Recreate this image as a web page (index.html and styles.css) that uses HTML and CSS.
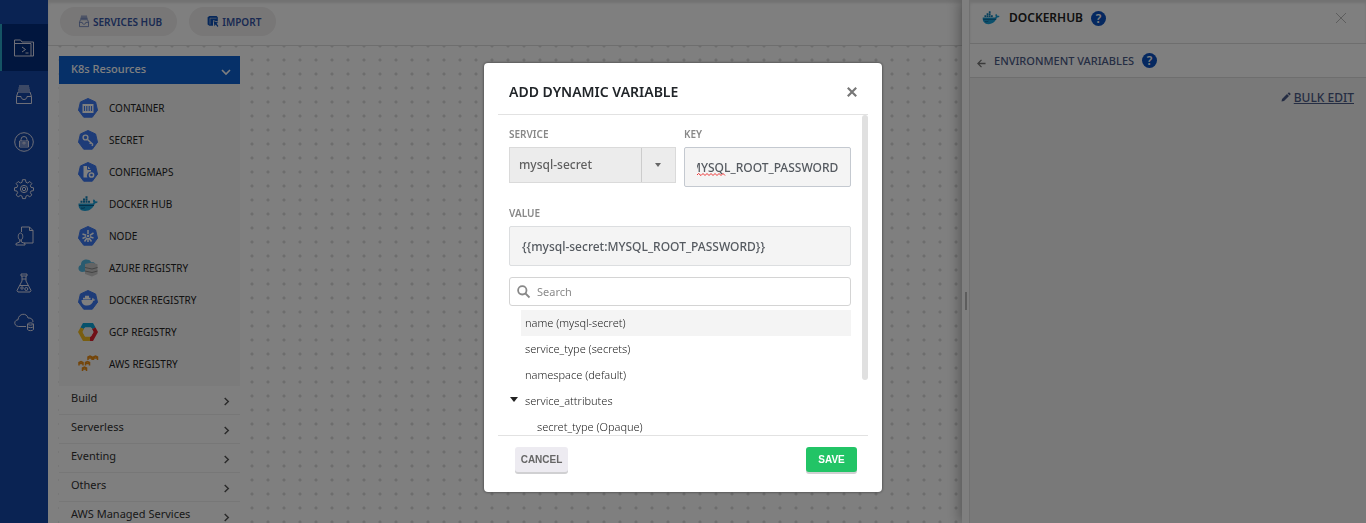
FILE: index.html
```html
<!DOCTYPE html>
<html lang="en">
<head>
<meta charset="utf-8">
<title>Add dynamic variable</title>
<link rel="stylesheet" href="styles.css">
</head>
<body>
<svg class="defs" aria-hidden="true">
  <symbol id="hept" viewBox="0 0 20 20"><path d="M10 .5 17.6 4 19.5 12.2 14.300 19.200H5.700L.5 12.200 2.400 4z" fill="#3c78f0" stroke="#3c78f0" stroke-linejoin="round"/></symbol>
  <symbol id="whale" viewBox="0 0 20 16"><path d="M.5 7.500h13.800c.6-.1 1-.4 1.200-.8-.8-1.100-.5-2.600.2-3.500 1 .6 1.500 1.400 1.500 2.200.9-.2 1.900 0 2.600.4-.5 1.200-1.500 1.700-2.900 1.700C15.300 11.800 12 15 7 15 2.700 15 .2 12.300.5 7.500z" fill="#19a0d8"/><path d="M2.500 4.800h2v2h-2zM5 4.800h2v2H5zM7.500 4.800h2v2h-2zM10 4.800h2v2h-2zM5 2.500h2v2H5zM7.500 2.500h2v2h-2zM7.500.2h2v2h-2z" fill="#0f80b8"/><path d="M1 9.500h15M3 12c1.500.5 3 .2 4-.5" stroke="#0b5f90" fill="none"/></symbol>
  <symbol id="tray" viewBox="0 0 20 20"><path d="M2.500 11.500 4 7h12l1.500 4.500V18.500h-15zM2.500 11.500h4.500c0 4 6 4 6 0h4.500M4 5h12M4.500 3h11M5 1h10" fill="none" stroke="currentColor" stroke-linejoin="round"/></symbol>
  <symbol id="chev" viewBox="0 0 10 10"><path d="m3 1 4 4-4 4" fill="none" stroke="currentColor" stroke-width="1.600"/></symbol>
</svg>

<div class="app">
  <nav class="rail" aria-label="Main">
    <a href="#" class="rail-item active" aria-label="Workspace"><svg viewBox="0 0 20 20"><path d="M.5 18V2h6l1.500 2h11.500v14zM.5 5.500h16.500M17 5.500V18M8 9l3.500 2.500L8 14M11.500 15h3"/></svg></a>
    <a href="#" class="rail-item" aria-label="Services"><svg><use href="#tray"/></svg></a>
    <a href="#" class="rail-item" aria-label="Vault"><svg viewBox="0 0 20 20"><circle cx="10" cy="10" r="9.300"/><path d="M5.500 9h9v6h-9zM7 9V7.500a3 3 0 0 1 6 0V9M5.500 11h3.500m2 0h3.500M5.500 13h9M9 10.300h2v1.500H9z"/></svg></a>
    <a href="#" class="rail-item" aria-label="Settings"><svg viewBox="0 0 20 20"><path d="M8.500.7h3l.5 2.600 1.600.7 2.200-1.500 2 2-1.500 2.200.7 1.700 2.500.4v2.800l-2.600.5-.6 1.600 1.500 2.200-2 2-2.200-1.500-1.600.7-.5 2.500h-3L8 17.100l-1.600-.7-2.200 1.500-2-2 1.500-2.200-.7-1.600-2.500-.5V8.800L3 8.400l.7-1.700-1.500-2.200 2-2L6.400 4 8 3.300z"/><circle cx="10" cy="10" r="3.600"/><circle cx="10" cy="10" r="1.700"/></svg></a>
    <a href="#" class="rail-item" aria-label="Profiles"><svg viewBox="0 0 20 20"><path d="M7.500 6V1h8l3.500 3.500V17h-9M15.500 1v3.500H19M6.500 7C3.500 7 3.500 14 6.500 14s3-7 0-7zM5.800 14v2L2 17.500V19h9v-1.500L7.300 16v-2"/></svg></a>
    <a href="#" class="rail-item" aria-label="Labs"><svg viewBox="0 0 20 20"><path d="M7 1h6v2H7zM8 3v5L3 17.500l1 1.500h12l1-1.500L12 8V3M8 6h4M5.500 12.500h9"/><circle cx="8" cy="15" r="1.200"/><circle cx="12.300" cy="16" r="1.500"/></svg></a>
    <a href="#" class="rail-item short" aria-label="Cloud storage"><svg viewBox="0 0 20 20"><path d="M12 14.500H4.500C-.5 14-.3 8 4 7.800 4.500 1 13 .5 14 6c3-.5 5 1.500 5 4M13.500 12v5.500c1 1.500 5 1.500 6 0V12c-1-1.500-5-1.500-6 0 1 1.500 5 1.500 6 0M13.500 14.500c1 1.500 5 1.500 6 0"/></svg></a>
  </nav>

  <main class="workspace">
    <header class="toolbar">
      <button class="pill"><svg><use href="#tray"/></svg>SERVICES HUB</button>
      <button class="pill"><svg viewBox="0 0 20 20"><path d="M1 3 4 1h12l2 2v7l-8-2v9H4l-3-2z" fill="#0c4fb4"/><path d="M5 4.500h11M5 4.500V15" stroke="#ddd" fill="none"/><path d="m11 9 8 3-3 1.500 3 4-1.500 1.500-3-4L12.500 18z" fill="#0c4fb4"/></svg>IMPORT</button>
    </header>
    <div class="canvas">
      <section class="palette">
        <button class="palette-head">K8s Resources<svg class="down"><use href="#chev"/></svg></button>
        <ul class="resources">
          <li><svg><use href="#hept"/><path d="M4.500 6h11v9h-11z" fill="#fff"/><path d="M6.500 8v5m2.300-5v5m2.400-5v5m2.300-5v5" stroke="#3c78f0" stroke-width="1.200"/></svg>CONTAINER</li>
          <li><svg><use href="#hept"/><circle cx="7.500" cy="7.500" r="2.400" fill="none" stroke="#fff" stroke-width="1.400"/><path d="m9.500 9.500 5.500 5m-2-2-1.300 1.300m3.300.7-1.200 1.200" stroke="#fff" stroke-width="1.500"/></svg>SECRET</li>
          <li><svg><use href="#hept"/><path d="M5.500 4h4l3.500 3.500v2A4 4 0 0 0 9.500 15.500h-4z" fill="#fff"/><path d="M9.500 4v3.500H13" stroke="#3c78f0" fill="none"/><circle cx="13.500" cy="13" r="2.100" fill="none" stroke="#fff" stroke-width="1.500"/></svg>CONFIGMAPS</li>
          <li><svg viewBox="0 -2 20 20"><use href="#whale" width="20" height="16"/></svg>DOCKER HUB</li>
          <li><svg><use href="#hept"/><path d="M10 4v4m0 4v4M4.500 8l3.700 1.300m3.600 1.400L15.500 12M4.500 12.500l3.700-1.800m3.600-1.400L15.500 7M6.500 15.500 9 12m2 0 2.500 3.500" stroke="#fff" stroke-width="1.500"/><circle cx="10" cy="10" r="1.200" fill="#fff"/></svg>NODE</li>
          <li><svg viewBox="0 0 20 20"><path d="M4 14C-.5 13.500-.5 7.500 3 7 2.500 1 11 0 13 4c3-.5 4.500 1 4.500 3v5z" fill="#53b7e0"/><path d="m7 6 7-1.500 5.500 1.800V16L14 18.500 7 16z" fill="#c8c8c8"/><path d="m7 9.500 7 1.500 5.500-1.500M7 13l7 1.500 5.500-1.500" stroke="#888" fill="none"/></svg>AZURE REGISTRY</li>
          <li><svg><use href="#hept"/><path d="M3.500 10H14c0-1 .2-1.700.8-2.200.7.500.9 1.200 1 1.700h1.500c-.3 1-1 1.300-2 1.300C14.500 14 12.300 15.500 9 15.500c-3.500 0-5.500-2-5.500-5.500zM5 7.700h7.500v1.900H5zM7 5.700h4v2H7z" fill="#fff"/></svg>DOCKER REGISTRY</li>
          <li><svg viewBox="0 0 20 20"><path d="M5 1h10l2.500 4.500-3 1.500L13 5.500H7L5.500 7 2.500 5.500z" fill="#0ba5d8"/><path d="m17.500 5.500 2.500 4.500-5 9h-3v-4.500h1l2.600-4.500-1.600-3z" fill="#e2212f"/><path d="M0 10 2.500 5.500 6 7l-1.400 3L7 14.500h5V19H5z" fill="#f3bd21"/><path d="M7.200 5.500h5.600l2.600 4.500-2.600 4.500H7.200L4.600 10z" fill="#eee"/></svg>GCP REGISTRY</li>
          <li><svg viewBox="0 0 20 20"><g fill="none" stroke="#e88b13" stroke-width="1.500"><path d="M1 11.500V8.500l2-1 2 1v3M7.500 11.500V8.500l2-1 2 1v3M10 6V3l2-1 2 1v3M15.500 6V3l2-1 2 1v3M4.500 17v-3l2-1 2 1v3M1 9.500h4m2.500 0h4M10 4h4m1.500 0h4m-15 11h4"/></g></svg>AWS REGISTRY</li>
        </ul>
        <ul class="groups">
          <li><button>Build<svg><use href="#chev"/></svg></button></li>
          <li><button>Serverless<svg><use href="#chev"/></svg></button></li>
          <li><button>Eventing<svg><use href="#chev"/></svg></button></li>
          <li><button>Others<svg><use href="#chev"/></svg></button></li>
          <li><button>AWS Managed Services<svg><use href="#chev"/></svg></button></li>
        </ul>
      </section>
    </div>
  </main>

  <aside class="drawer">
    <div class="grip"><span></span></div>
    <div class="drawer-main">
      <header class="drawer-head">
        <svg class="logo"><use href="#whale"/></svg><h2>DOCKERHUB</h2><button class="help" aria-label="Help">?</button>
        <button class="drawer-close" aria-label="Close panel"><svg viewBox="0 0 12 12"><path d="m1 1 10 10M11 1 1 11"/></svg></button>
      </header>
      <div class="drawer-sub">
        <button class="back" aria-label="Back"><svg viewBox="0 0 10 10"><path d="M9.500 5H1m4-4L1 5l4 4"/></svg></button><h3>ENVIRONMENT VARIABLES</h3><button class="help" aria-label="Help">?</button>
      </div>
      <div class="drawer-body">
        <svg viewBox="0 0 10 10"><path d="M.5 9.500 1 7l5-5 2 2-5 5zM6.600 1.400 8 .2 9.800 2 8.600 3.400z" fill="#4b5a86"/></svg><a href="#">BULK EDIT</a>
      </div>
    </div>
  </aside>
</div>

<div class="overlay">
  <form class="modal" role="dialog" aria-modal="true" aria-labelledby="title">
    <header class="modal-head">
      <h1 id="title">ADD DYNAMIC VARIABLE</h1>
      <button type="button" class="close" aria-label="Close"><svg viewBox="0 0 10 10"><path d="m1.500 1.500 7 7m0-7-7 7"/></svg></button>
    </header>
    <div class="modal-body">
      <div class="fields">
        <div class="field">
          <label for="service">SERVICE</label>
          <div class="select"><select id="service"><option>mysql-secret</option></select></div>
        </div>
        <div class="field">
          <label for="key">KEY</label>
          <div class="key-box"><input id="key" value="MYSQL_ROOT_PASSWORD" spellcheck="false"><svg class="squiggle" viewBox="0 0 30 3"><path d="m0 2 1.500-1.500L4 2.500l2-2 2 2 2-2 2 2 2-2 2 2 2-2 2 2 2-2 2 2 2-2 2 2"/></svg></div>
        </div>
      </div>
      <div class="field value">
        <label for="value">VALUE</label>
        <input id="value" value="{{mysql-secret:MYSQL_ROOT_PASSWORD}}" spellcheck="false">
      </div>
      <div class="search">
        <svg viewBox="0 0 13 13"><circle cx="5.300" cy="5.300" r="4.200"/><path d="m8.500 8.500 4 4"/></svg>
        <input type="search" aria-label="Search" placeholder="Search">
      </div>
      <ul class="tree">
        <li class="selected">name (mysql-secret)</li>
        <li>service_type (secrets)</li>
        <li>namespace (default)</li>
        <li class="open">service_attributes</li>
        <li class="nested">secret_type (Opaque)</li>
      </ul>
      <span class="thumb"></span>
    </div>
    <footer class="modal-foot">
      <button type="button" class="btn cancel">CANCEL</button>
      <button type="submit" class="btn save">SAVE</button>
    </footer>
  </form>
</div>
<script src="main.js"></script>
</body>
</html>
```
FILE: styles.css
```css
* { box-sizing: border-box; }
body { margin: 0; font: 12px/16px "Noto Sans", sans-serif; color: #222; overflow: hidden; }
h1, h2, h3, ul { margin: 0; padding: 0; list-style: none; }
button { font: inherit; color: inherit; border: 0; background: none; padding: 0; cursor: pointer; }
input, select { font: inherit; color: inherit; }
svg { flex: none; overflow: visible; }
.defs { position: absolute; width: 0; height: 0; }

.app { display: flex; height: 100vh; }

.rail { width: 48px; flex: none; background: #1446a6; padding-top: 24px; }
.rail-item { display: flex; align-items: center; justify-content: center; height: 47px; color: #dde; }
.rail-item.active { background: #022c7c; border-left: 2px solid #2ba9c9; padding-right: 2px; }
.rail-item.short { height: 32px; }
.rail-item svg { width: 20px; height: 20px; fill: none; stroke: currentColor; stroke-linejoin: round; }

.workspace { flex: 1; display: flex; flex-direction: column; min-width: 0; background: #fff; }
.toolbar { display: flex; gap: 12px; height: 46px; flex: none; padding: 7px 12px; border-bottom: 1px solid #ddd; box-shadow: inset 0 3px 3px #e4e4e4; }
.pill { display: flex; align-items: center; gap: 3px; height: 29px; padding: 0 15px 0 18px; border-radius: 15px; background: #f0eeee; color: #3454a4; font-size: 10px; font-weight: 600; }
.pill svg { width: 12px; height: 13px; }
.canvas { flex: 1; min-height: 0; padding: 10px 11px 0; background: radial-gradient(circle, #dadada 1px, transparent 2px) 4px 7px / 16px 14px; }

.palette { width: 181px; background: #fff; }
.palette-head { display: flex; align-items: center; justify-content: space-between; width: 100%; height: 28px; padding: 0 9px 2px 12px; background: #0c60d0; color: #fff; font-size: 11px; font-weight: 500; }
.palette-head svg { width: 10px; height: 10px; margin-top: 6px; stroke-width: 2; }
.down { transform: rotate(90deg); }
.resources { background: #f6f6f6; padding: 8px 0 6px; }
.resources li { display: flex; align-items: center; gap: 11px; height: 32px; padding-left: 19px; font-size: 10px; }
.resources svg { width: 20px; height: 20px; }
.groups button { display: flex; align-items: center; justify-content: space-between; width: 100%; height: 29px; padding: 0 9px 5px 12px; border-bottom: 1px solid #eee; color: #333; font-size: 11px; }
.groups svg { width: 9px; height: 9px; margin-top: 8px; color: #555; }

.drawer { width: 404px; flex: none; display: flex; background: #fff; box-shadow: -3px 0 12px rgba(0,0,0,.3); z-index: 1; }
.grip { display: flex; align-items: center; width: 8px; padding: 79px 0 0 3px; border-right: 1px solid #e2e2e2; }
.grip span { height: 18px; width: 2px; background: #bbb; }
.drawer-main { flex: 1; display: flex; flex-direction: column; }
.drawer-head, .drawer-sub { display: flex; align-items: center; border-bottom: 1px solid #ddd; }
.drawer-head { height: 44px; padding: 0 19px 7px 12px; box-shadow: inset 0 3px 3px #e4e4e4; }
.logo { width: 18px; height: 14px; margin-right: 9px; }
h2 { font-size: 12px; line-height: 16px; font-weight: 600; margin-right: 8px; }
.help { width: 15px; height: 15px; border-radius: 50%; background: #0b50c0; color: #fff; font-size: 12px; line-height: 15px; font-weight: 600; }
.drawer-close { margin-left: auto; height: 12px; }
.drawer-close svg { width: 12px; height: 12px; stroke: #bbb; }
.drawer-sub { height: 34px; padding: 0 7px; }
.back { height: 10px; margin-right: 8px; }
.back svg { width: 9px; height: 9px; fill: none; stroke: #777; stroke-width: 1.4; }
h3 { color: #4b5a86; font-size: 11px; line-height: 16px; font-weight: 500; margin-right: 8px; }
.drawer-body { flex: 1; display: flex; align-items: flex-start; justify-content: flex-end; gap: 3px; padding: 12px; background: #f3f3f3; }
.drawer-body svg { width: 10px; height: 10px; margin-top: 2px; }
.drawer-body a { color: #4b5a86; font-size: 12px; font-weight: 500; }

.overlay { position: fixed; inset: 0; z-index: 5; display: flex; align-items: flex-start; justify-content: center; padding-top: 63px; background: rgba(0,0,0,.5); }
.modal { width: 398px; padding: 0 14px; border-radius: 4px; background: #fff; box-shadow: 0 0 3px rgba(0,0,0,.6); }
.modal-head { display: flex; align-items: center; justify-content: space-between; height: 52px; padding: 6px 10px 0 11px; border-bottom: 1px solid #e2e2e2; }
h1 { font-size: 14px; line-height: 20px; font-weight: 600; color: #212529; }
.close { height: 12px; }
.close svg { width: 12px; height: 12px; stroke: #777; stroke-width: 1.8; }
.modal-body { position: relative; height: 320px; overflow: hidden; padding: 11px 17px 0 11px; }
.thumb { position: absolute; top: 0; right: 0; width: 6px; height: 265px; border-radius: 3px; background: #e0e0e0; }
.fields { display: grid; grid-template-columns: 1fr 1fr; gap: 8px; }
.field { min-width: 0; }
.field label { display: block; margin-bottom: 5px; color: #888; font-size: 10px; font-weight: 600; }
.field input { display: block; width: 100%; height: 40px; padding: 0 12px; border: 1px solid #dcdee0; border-radius: 2px; background: #f4f4f4; color: #555a60; font-size: 12px; font-weight: 500; outline: none; }
.select { position: relative; }
.select select { appearance: none; display: block; width: 100%; height: 36px; padding: 0 44px 0 9px; border: 1px solid #dadada; border-radius: 0; background: linear-gradient(#ccc, #ccc) right 33px top / 1px 100% no-repeat #ececec; color: #606060; font-weight: 500; }
.select::after { content: ""; position: absolute; right: 15px; top: 16px; border: 3px solid transparent; border-top: 4px solid #666; border-bottom: 0; }
.key-box { position: relative; }
.key-box input { border-color: #c4c9d0; }
.squiggle { position: absolute; left: 13px; bottom: 11px; width: 30px; height: 3px; fill: none; stroke: #e33; }
.value { margin-top: 18px; }
.search { display: flex; align-items: center; gap: 7px; height: 29px; margin-top: 11px; padding: 0 7px; border: 1px solid #d4d4d4; border-radius: 3px; }
.search svg { width: 13px; height: 13px; fill: none; stroke: #888; stroke-width: 1.8; }
.search input { flex: 1; min-width: 0; border: 0; outline: 0; background: none; padding: 0; font-size: 11px; }
.search input::placeholder { color: #8a8a8a; }
.tree { padding: 4px 0 0 12px; font-size: 11px; font-weight: 300; }
.tree li { height: 26px; padding: 5px 4px; }
.selected { background: #f4f4f4; }
.tree .nested { padding-left: 16px; }
.open { position: relative; }
.open::before { content: ""; position: absolute; left: -11px; top: 9px; border: 4px solid transparent; border-top: 5px solid #222; border-bottom: 0; }
.modal-foot { display: flex; justify-content: space-between; padding: 11px 11px 20px 17px; border-top: 1px solid #e2e2e2; }
.btn { height: 25px; border-radius: 3px; font: bold 10px/16px "Liberation Sans", sans-serif; box-shadow: 0 2px 0 #d0d0d2; }
.cancel { width: 53px; background: #edebf1; color: #666; }
.save { width: 51px; background: #22c466; color: #fff; }
```
FILE: main.js
```js
// Keep the end of a long key in view.
const key = document.getElementById('key');
key.scrollLeft = key.scrollWidth;
```
